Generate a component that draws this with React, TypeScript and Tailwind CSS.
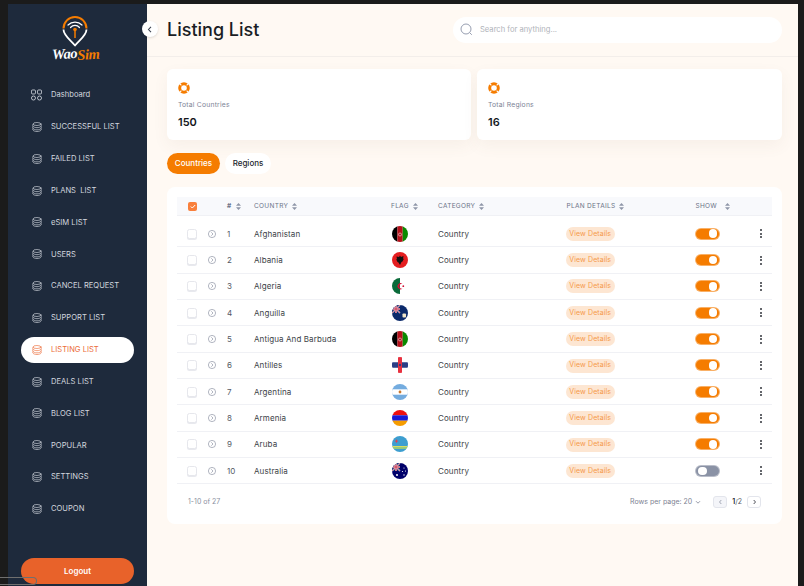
import React from "react";

const nav = ["Dashboard","SUCCESSFUL LIST","FAILED LIST","PLANS  LIST","eSIM LIST","USERS","CANCEL REQUEST","SUPPORT LIST","LISTING LIST","DEALS LIST","BLOG LIST","POPULAR","SETTINGS","COUPON"];

function Stack({ c = "#d6dae2" }: { c?: string }) {
  return (
    <svg width="10" height="10" viewBox="0 0 20 20" fill="none" stroke={c} strokeWidth="1.300" strokeLinejoin="round" strokeLinecap="round">
      <ellipse cx="10" cy="4" rx="8" ry="3" />
      <path d="M2 4.500c-.8 1.500-.8 3 0 4 1.400 1.700 4.400 2.800 8 2.800s6.600-1.100 8-2.800c.8-1 .8-2.500 0-4" />
      <path d="M2 8.500c-1 1.700-1 3.300 0 4.400 1.400 1.700 4.400 2.800 8 2.800s6.600-1.100 8-2.800c1-1.100 1-2.700 0-4.400" />
      <path d="M2 13c-1 1.500-1 2.500 0 3.300 1.400 1.700 4.400 2.700 8 2.700s6.600-1 8-2.700c1-.8 1-1.800 0-3.300" />
    </svg>
  );
}

function Grid4() {
  return (
    <svg width="12" height="12" viewBox="0 0 12 12" fill="none" stroke="#d6dae2" strokeWidth="0.9">
      <rect x="0.500" y="0.500" width="4.400" height="4.400" rx="1.200" />
      <rect x="7.100" y="0.500" width="4.400" height="4.400" rx="1.200" />
      <rect x="0.500" y="7.100" width="4.400" height="4.400" rx="2.200" />
      <rect x="7.100" y="7.100" width="4.400" height="4.400" rx="2.200" />
    </svg>
  );
}

function Logo() {
  return (
    <div className="flex flex-col items-center h-[50px] w-[50px] relative mr-[6px]">
      <svg width="26" height="31" viewBox="0 0 26 31" fill="none">
        <path d="M1.500 12.500a11.500 11.500 0 0 1 23 0" stroke="#f57c00" strokeWidth="2" />
        <path d="M1.500 13.500c0 6 7 10.500 11.500 16C17.500 24 24.500 19.500 24.500 13.500" stroke="#ffffff" strokeWidth="1.800" strokeLinejoin="round" />
        <path d="M6 9a10 10 0 0 1 14 0M8.500 11.500a6 6 0 0 1 9 0" stroke="#ffffff" strokeWidth="1.200" strokeLinecap="round" />
        <circle cx="13" cy="13.500" r="1.800" fill="#f57c00" />
        <path d="M13 14v8" stroke="#f57c00" strokeWidth="1.500" />
      </svg>
      <div className="absolute top-[28px] left-[2px] whitespace-nowrap italic font-bold text-[14.500px] leading-[18px] tracking-[-0.4px] [font-family:'Liberation_Serif',serif] -rotate-3">
        <span className="text-white">Wao</span><span className="text-[#f57c00] relative top-[2px]">Sim</span>
      </div>
    </div>
  );
}

function Flag({ n }: { n: number }) {
  const uk = (
    <g>
      <rect width="8" height="8" fill="#012169" />
      <path d="M0 0l8 8M8 0L0 8" stroke="#fff" strokeWidth="1.200" />
      <path d="M0 0l8 8M8 0L0 8" stroke="#c8102e" strokeWidth="0.500" />
      <path d="M4 0v8M0 4h8" stroke="#fff" strokeWidth="1.600" />
      <path d="M4 0v8M0 4h8" stroke="#c8102e" strokeWidth="0.900" />
    </g>
  );
  const afg = (
    <g>
      <rect width="5.400" height="16" fill="#000" />
      <rect x="5.400" width="5.300" height="16" fill="#b5121b" />
      <rect x="10.700" width="5.300" height="16" fill="#0a8a00" />
      <circle cx="8" cy="8.500" r="1.500" fill="none" stroke="#e8c8c8" strokeWidth="0.700" />
    </g>
  );
  const body: Record<number, React.ReactNode> = {
    1: afg,
    2: (<g><rect width="16" height="16" fill="#e41e20" /><path d="M8 3.500l1 1.500 2.500-1-.5 3 1-.5-1.500 3-1 .5L8 13l-1.500-2.500-1-.5L4 7l1 .5-.5-3L7 5z" fill="#111" /></g>),
    3: (<g><rect width="8" height="16" fill="#0a6a3a" /><rect x="8" width="8" height="16" fill="#fff" /><path d="M10.500 6a3 3 0 1 0 0 4.500 2.400 2.400 0 1 1 0-4.500z" fill="#d21034" /><circle cx="11.300" cy="8.200" r="0.900" fill="#d21034" /></g>),
    4: (<g><rect width="16" height="16" fill="#0b2a6b" />{uk}<rect x="10.500" y="8.500" width="3.500" height="4" rx="0.800" fill="#f1e7c9" /></g>),
    5: afg,
    6: (<g><rect y="5.500" width="16" height="5" fill="#2a3f86" /><rect x="6" width="4" height="16" fill="#e8303f" /><rect y="5.500" x="0" width="6" height="5" fill="#2a3f86" /><rect y="5.500" x="10" width="6" height="5" fill="#2a3f86" /><circle cx="8" cy="8" r="1.200" fill="#2a3f86" /></g>),
    7: (<g><rect width="16" height="16" fill="#74acdf" /><rect y="5.300" width="16" height="5.400" fill="#fff" /><circle cx="8" cy="8" r="1.400" fill="#c9772c" /></g>),
    8: (<g><rect width="16" height="5.300" fill="#f01010" /><rect y="5.300" width="16" height="5.400" fill="#1a1ad6" /><rect y="10.700" width="16" height="5.300" fill="#f59c00" /></g>),
    9: (<g><rect width="16" height="16" fill="#3d9ed0" /><rect y="10" width="16" height="1.300" fill="#d9dd60" /><rect y="11.300" width="16" height="1.500" fill="#a9d46a" /><path d="M4.500 3l.6 1.500 1.500.6-1.500.6L4.500 7.200l-.6-1.500-1.500-.6 1.500-.6z" fill="#e04050" /></g>),
    10: (<g><rect width="16" height="16" fill="#00006a" />{uk}<circle cx="12" cy="5" r="0.600" fill="#fff" /><circle cx="13.500" cy="8" r="0.600" fill="#fff" /><circle cx="10.500" cy="8.500" r="0.600" fill="#fff" /><circle cx="12" cy="12" r="0.700" fill="#fff" /><circle cx="5" cy="12" r="1" fill="#fff" /></g>),
  };
  return (
    <span className="block w-[16px] h-[16px] rounded-full overflow-hidden">
      <svg width="16" height="16" viewBox="0 0 16 16">{body[n]}</svg>
    </span>
  );
}

function Sort() {
  return (
    <svg width="5" height="7" viewBox="0 0 5 7" fill="#8f96a8" className="ml-[4px]">
      <path d="M2.500 0L5 2.800H0zM2.500 7L0 4.200h5z" />
    </svg>
  );
}

function Buoy() {
  return (
    <svg width="12" height="12" viewBox="0 0 12 12" fill="none">
      <circle cx="6" cy="6" r="4.300" stroke="#f57c00" strokeWidth="3" />
      <path d="M1.600 1.600l1.800 1.800M10.400 1.600L8.600 3.400M1.600 10.400l1.800-1.800M10.400 10.400L8.600 8.600" stroke="#ffffff" strokeWidth="1.100" />
    </svg>
  );
}

const rows = ["Afghanistan","Albania","Algeria","Anguilla","Antigua And Barbuda","Antilles","Argentina","Armenia","Aruba","Australia"];

function Head({ w, label, extra }: { w: string; label: string; extra?: string }) {
  return (
    <div className={"flex items-center text-[6.500px] tracking-[0.300px] text-[#6b7387] " + w}>
      <span className={extra}>{label}</span>
      <Sort />
    </div>
  );
}

export default function App() {
  return (
    <div className="w-[804px] h-[586px] bg-[#1b1b1b] pt-[4px] pl-[8px] pr-[6px] overflow-hidden relative [font-family:Inter,sans-serif]">
      <div className="flex h-[582px]">
        <aside className="w-[139px] shrink-0 bg-[#1e2a3c] flex flex-col relative">
          <div className="flex justify-center pt-[12px] h-[74px]"><Logo /></div>
          <nav className="flex flex-col gap-[5.850px] px-[13px] mt-[4px]">
            {nav.map((t, i) => {
              const a = t === "LISTING LIST";
              return (
                <div key={t} className={"h-[26px] flex items-center pl-[10px] gap-[9px] rounded-full " + (a ? "bg-white" : "")}>
                  <span className="w-[11px] flex justify-center">{i === 0 ? <Grid4 /> : <Stack c={a ? "#ec6d3a" : "#d6dae2"} />}</span>
                  <span className={"text-[7.600px] whitespace-pre " + (a ? "text-[#ec6d3a]" : "text-[#d3d7df]")}>{t}</span>
                </div>
              );
            })}
          </nav>
          <div className="mt-auto px-[13px] pb-[2px]">
            <div className="h-[26px] rounded-full bg-[#e8622a] flex items-center justify-center text-white text-[8px] font-semibold">Logout</div>
          </div>
          <button className="absolute -right-[11px] top-[17px] w-[16px] h-[16px] rounded-full bg-white flex items-center justify-center shadow-sm">
            <svg width="6" height="7" viewBox="0 0 6 7" fill="none" stroke="#3a4250" strokeWidth="1.100"><path d="M4 .8L1.500 3.500 4 6.200" /></svg>
          </button>
        </aside>

        <main className="flex-1 bg-[#fff9f3] flex flex-col min-w-0">
          <header className="h-[52.500px] shrink-0 border-b border-[#f3eeea] flex items-center pl-[20px] pr-[16px] justify-between">
            <h1 className="text-[18px] font-medium text-[#1a1d24] leading-none">Listing List</h1>
            <div className="w-[329px] h-[26px] rounded-full bg-white flex items-center pl-[7px] gap-[7px]">
              <svg width="13" height="13" viewBox="0 0 13 13" fill="none" stroke="#8b93a7" strokeWidth="0.900"><circle cx="6" cy="6" r="5" /><path d="M9.800 9.800l2 2" /></svg>
              <span className="text-[7.600px] text-[#b0b3ba]">Search for anything...</span>
            </div>
          </header>

          <div className="pl-[20px] pr-[16px] pt-[12px]">
            <div className="flex gap-[6px]">
              {[["Total Countries","150"],["Total Regions","16"]].map(([l, v], i) => (
                <div key={l} className={"h-[71px] rounded-[6px] bg-white pl-[11px] pt-[13px] shadow-[0_6px_16px_rgba(120,90,70,0.06)] " + (i === 0 ? "w-[304px]" : "flex-1")}>
                  <Buoy />
                  <div className="text-[6.800px] text-[#7d8496] mt-[6px] leading-[10px] tracking-[0.2px]">{l}</div>
                  <div className="text-[11px] font-semibold text-[#14171c] mt-[6px] leading-[13px]">{v}</div>
                </div>
              ))}
            </div>

            <div className="flex gap-[5px] mt-[13px]">
              <div className="h-[21px] w-[53px] rounded-full bg-[#f57c00] text-white text-[8px] font-medium flex items-center justify-center">Countries</div>
              <div className="h-[21px] w-[46px] rounded-full bg-white text-[#23262e] text-[8px] font-medium flex items-center justify-center">Regions</div>
            </div>

            <section className="mt-[13px] h-[337px] bg-white rounded-[8px] px-[10px] pt-[10px]">
              <div className="h-[19px] pt-[2px] bg-[#f8f9fc] border-b border-[#f0f1f5] flex items-center">
                <span className="ml-[11px] w-[9px] h-[9px] rounded-[2px] bg-[#f9803c] flex items-center justify-center">
                  <svg width="6" height="5" viewBox="0 0 6 5" fill="none" stroke="#fff" strokeWidth="1"><path d="M.8 2.500l1.500 1.500L5.200 1" /></svg>
                </span>
                <div className="w-[30px]" />
                <Head w="w-[27px]" label="#" extra="font-bold" />
                <Head w="w-[137px]" label="COUNTRY" />
                <Head w="w-[47px]" label="FLAG" />
                <Head w="w-[128.500px]" label="CATEGORY" />
                <Head w="w-[129px]" label="PLAN DETAILS" />
                <div className="flex items-center text-[6.500px] tracking-[0.300px] text-[#6b7387]"><span className="mr-[4px]">SHOW</span><Sort /></div>
              </div>
              <div className="pt-[5.500px]">
                {rows.map((r, i) => (
                  <div key={r} className="h-[26.350px] border-b border-[#f0f1f5] flex items-center relative text-[#3c3f47] text-[8px] tracking-[0.100px]">
                    <span className="ml-[10px] w-[10px] h-[10px] rounded-[2.500px] border border-[#e6e7ec] bg-white shadow-[0_1px_0_#e8e9ee]" />
                    <span className="ml-[11px] w-[8px] h-[8px] flex">
                      <svg width="8" height="8" viewBox="0 0 8 8" fill="none" stroke="#7e8597" strokeWidth="0.600"><circle cx="4" cy="4" r="3.600" /><path d="M3.300 2.300L5 4 3.300 5.700" /></svg>
                    </span>
                    <span className="ml-[11px] w-[27px] text-[#555965]">{i + 1}</span>
                    <span className="w-[138px]">{r}</span>
                    <span className="w-[46px]"><Flag n={i + 1} /></span>
                    <span className="w-[128px]">Country</span>
                    <span className="w-[129px]">
                      <span className="inline-flex items-center justify-center w-[48.500px] h-[14px] rounded-full bg-[#fde6d2] text-[#f59a4a] text-[7px]">View Details</span>
                    </span>
                    <span className={"w-[25px] h-[12px] rounded-full flex items-center px-[2px] border border-white/40 " + (i === 9 ? "bg-[#8a92a5] justify-start" : "bg-[#f57c00] justify-end")}>
                      <span className="w-[8.500px] h-[8.500px] rounded-full bg-white" />
                    </span>
                    <span className="absolute left-[583px] flex flex-col gap-[1.500px]">
                      <i className="block w-[2px] h-[2px] bg-[#30333a] rounded-full" />
                      <i className="block w-[2px] h-[2px] bg-[#30333a] rounded-full" />
                      <i className="block w-[2px] h-[2px] bg-[#30333a] rounded-full" />
                    </span>
                  </div>
                ))}
              </div>
              <div className="flex items-center h-[36px] pl-[11px] pr-[11px] text-[7px] text-[#8b90a0]">
                <span>1-10 of 27</span>
                <span className="ml-auto text-[#7d8293]">Rows per page: 20</span>
                <svg width="6" height="5" viewBox="0 0 6 5" fill="none" stroke="#7d8293" strokeWidth="0.800" className="ml-[3px]"><path d="M1 1.200l2 2 2-2" /></svg>
                <span className="ml-[12px] w-[14px] h-[12px] rounded-[3px] border border-[#e3e5ec] bg-[#f4f5f9] flex items-center justify-center">
                  <svg width="5" height="6" viewBox="0 0 5 6" fill="none" stroke="#8b90a0" strokeWidth="0.800"><path d="M3.300 1L1.500 3l1.800 2" /></svg>
                </span>
                <span className="ml-[5px] text-[#555965]"><b className="font-semibold text-[#23262e]">1</b>/2</span>
                <span className="ml-[5px] w-[14px] h-[12px] rounded-[3px] border border-[#e3e5ec] bg-white flex items-center justify-center">
                  <svg width="5" height="6" viewBox="0 0 5 6" fill="none" stroke="#23262e" strokeWidth="0.800"><path d="M1.700 1L3.500 3 1.700 5" /></svg>
                </span>
              </div>
            </section>
          </div>
        </main>
      </div>
      <div className="absolute left-0 top-[577px] w-[37px] h-[8px] border border-[#6f6f6f] rounded-r-[4px] border-l-0" />
    </div>
  );
}
